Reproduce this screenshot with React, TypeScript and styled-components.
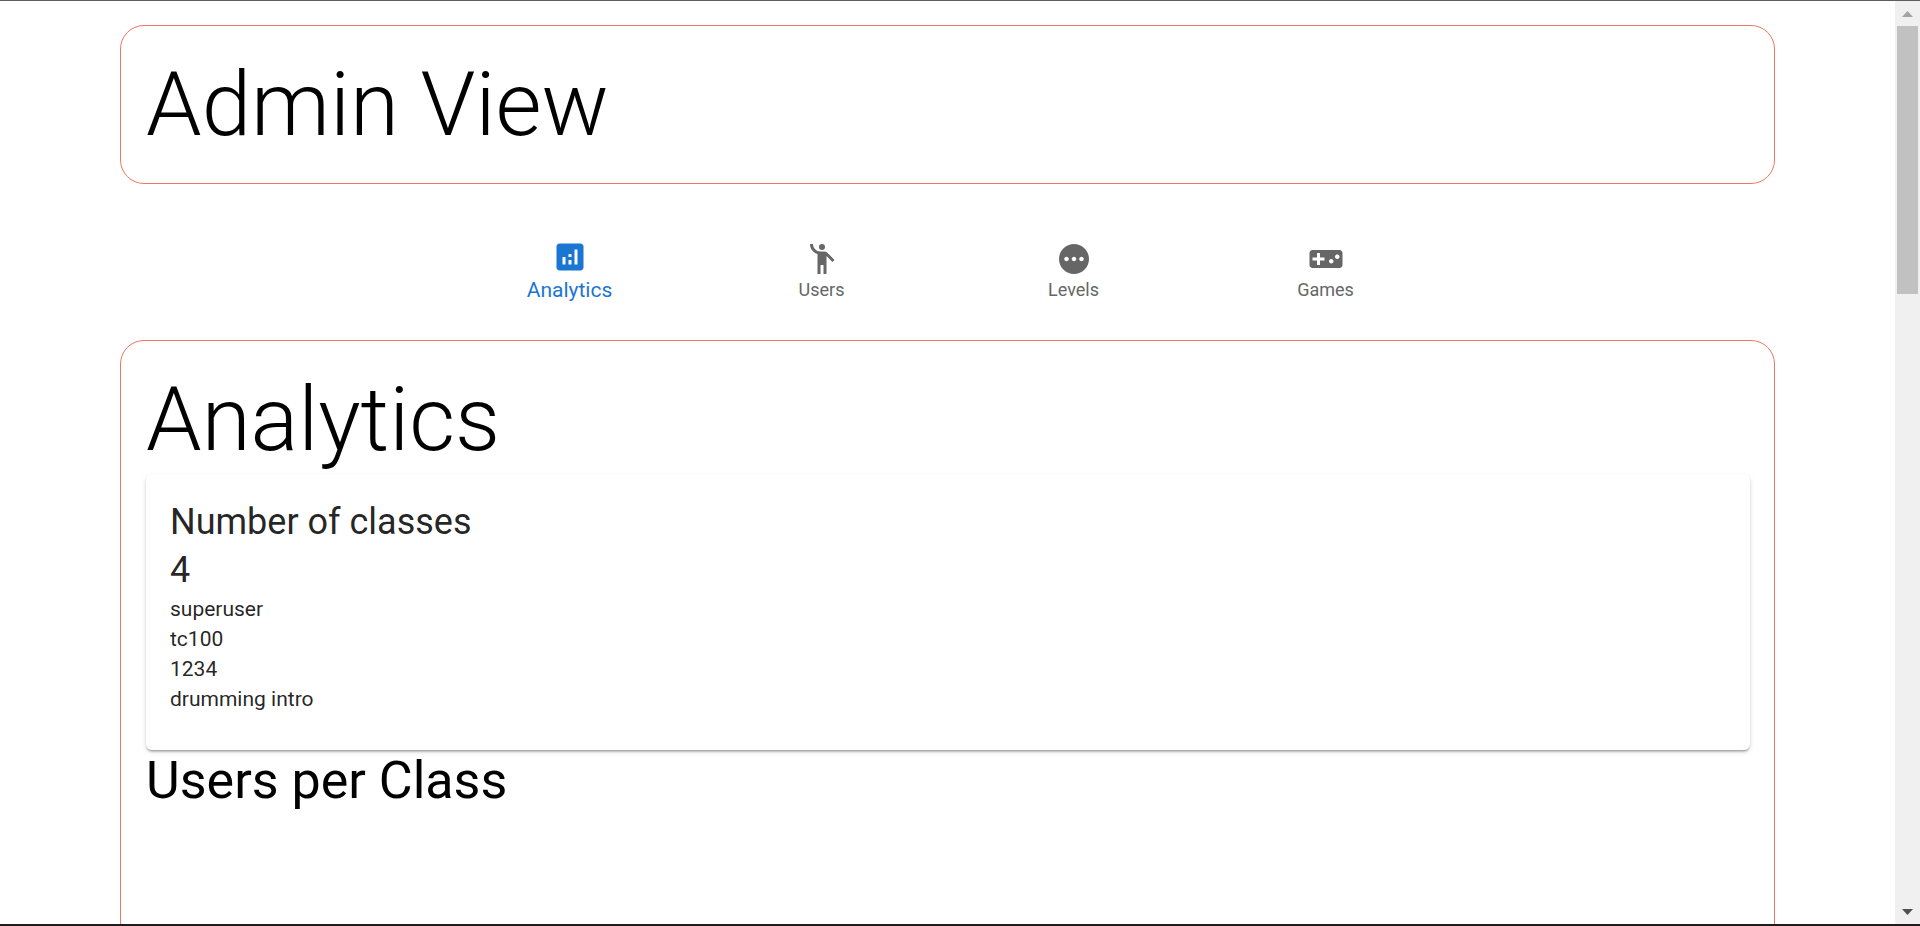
import React, { useState } from "react";
import styled, { createGlobalStyle } from "styled-components";
import type { IconType } from "react-icons";
import {
  MdAnalytics,
  MdEmojiPeople,
  MdPending,
  MdVideogameAsset,
} from "react-icons/md";

const GlobalStyle = createGlobalStyle`
  *, *::before, *::after { box-sizing: border-box; }
  body {
    margin: 0;
    background: #fff;
    color: #000;
    font-family: Roboto, "Liberation Sans", sans-serif;
  }
`;

const Frame = styled.div`
  display: flex;
  height: 100vh;
  overflow: hidden;
  border-top: 1px solid #5f5d64;
  border-bottom: 2px solid #1f1b1f;
`;

const Page = styled.main`
  flex: 1;
  min-width: 0;
  overflow: hidden;
  padding: 24px 120px 0;
`;

const Panel = styled.section<{ $tall?: boolean }>`
  border: 1px solid #ec7766;
  border-radius: 24px;
  padding: 25px 24px 24px 25px;
  min-height: ${(p) => (p.$tall ? "100vh" : "0")};
`;

const Title = styled.h1`
  margin: 0;
  font-size: 89px;
  font-weight: 300;
  line-height: 108px;
`;

const Nav = styled.nav`
  display: flex;
  justify-content: center;
  height: 84px;
  margin: 46px 0 26px;
`;

const NavButton = styled.button<{ $selected: boolean }>`
  flex: 0 1 252px;
  display: flex;
  flex-direction: column;
  align-items: center;
  justify-content: center;
  padding: 0 18px;
  border: 0;
  background: transparent;
  font-family: inherit;
  cursor: pointer;
  color: ${(p) => (p.$selected ? "#1976d2" : "#666")};
  font-size: ${(p) => (p.$selected ? "21px" : "18px")};
  line-height: ${(p) => (p.$selected ? "30px" : "26px")};

  svg {
    width: 36px;
    height: 36px;
    flex: none;
  }
`;

const Card = styled.article`
  padding: 24px 24px 36px;
  border-radius: 6px;
  background: #fff;
  color: rgba(0, 0, 0, 0.87);
  box-shadow:
    0 3px 2px -2px rgba(0, 0, 0, 0.2),
    0 2px 2px 0 rgba(0, 0, 0, 0.14),
    0 2px 5px 0 rgba(0, 0, 0, 0.12);
`;

const CardHeading = styled.h3`
  margin: 0;
  font-size: 36px;
  font-weight: 400;
  line-height: 48px;
`;

const CardValue = styled.p`
  margin: 0;
  font-size: 36px;
  line-height: 48px;
`;

const ClassList = styled.ul`
  margin: 0;
  padding: 0;
  list-style: none;
  font-size: 21px;
  line-height: 30px;
`;

const SectionHeading = styled.h3`
  margin: 0;
  font-size: 52px;
  font-weight: 400;
  line-height: 62px;
`;

const ScrollTrack = styled.div`
  flex: 0 0 25px;
  display: flex;
  flex-direction: column;
  align-items: center;
  background: #f0f0f0;
`;

const ScrollArrow = styled.svg`
  flex: none;
  width: 25px;
  height: 25px;
`;

const ScrollThumb = styled.div`
  width: 21px;
  height: 29%;
  margin-bottom: auto;
  background: #c1c1c1;
`;

const tabs: { label: string; Icon: IconType }[] = [
  { label: "Analytics", Icon: MdAnalytics },
  { label: "Users", Icon: MdEmojiPeople },
  { label: "Levels", Icon: MdPending },
  { label: "Games", Icon: MdVideogameAsset },
];

const classes = ["superuser", "tc100", "1234", "drumming intro"];

export default function App() {
  const [current, setCurrent] = useState("Analytics");

  return (
    <>
      <GlobalStyle />
      <Frame>
        <Page>
          <Panel>
            <Title>Admin View</Title>
          </Panel>
          <Nav>
            {tabs.map(({ label, Icon }) => (
              <NavButton
                key={label}
                type="button"
                $selected={label === current}
                onClick={() => setCurrent(label)}
              >
                <Icon aria-hidden />
                <span>{label}</span>
              </NavButton>
            ))}
          </Nav>
          <Panel $tall>
            <Title as="h2">Analytics</Title>
            <Card>
              <CardHeading>Number of classes</CardHeading>
              <CardValue>{classes.length}</CardValue>
              <ClassList>
                {classes.map((name) => (
                  <li key={name}>{name}</li>
                ))}
              </ClassList>
            </Card>
            <SectionHeading>Users per Class</SectionHeading>
          </Panel>
        </Page>
        <ScrollTrack aria-hidden>
          <ScrollArrow viewBox="0 0 25 25">
            <path d="M7 16h11l-5.5-6z" fill="#a3a3a3" />
          </ScrollArrow>
          <ScrollThumb />
          <ScrollArrow viewBox="0 0 25 25">
            <path d="M7 10h11l-5.5 6z" fill="#505050" />
          </ScrollArrow>
        </ScrollTrack>
      </Frame>
    </>
  );
}
